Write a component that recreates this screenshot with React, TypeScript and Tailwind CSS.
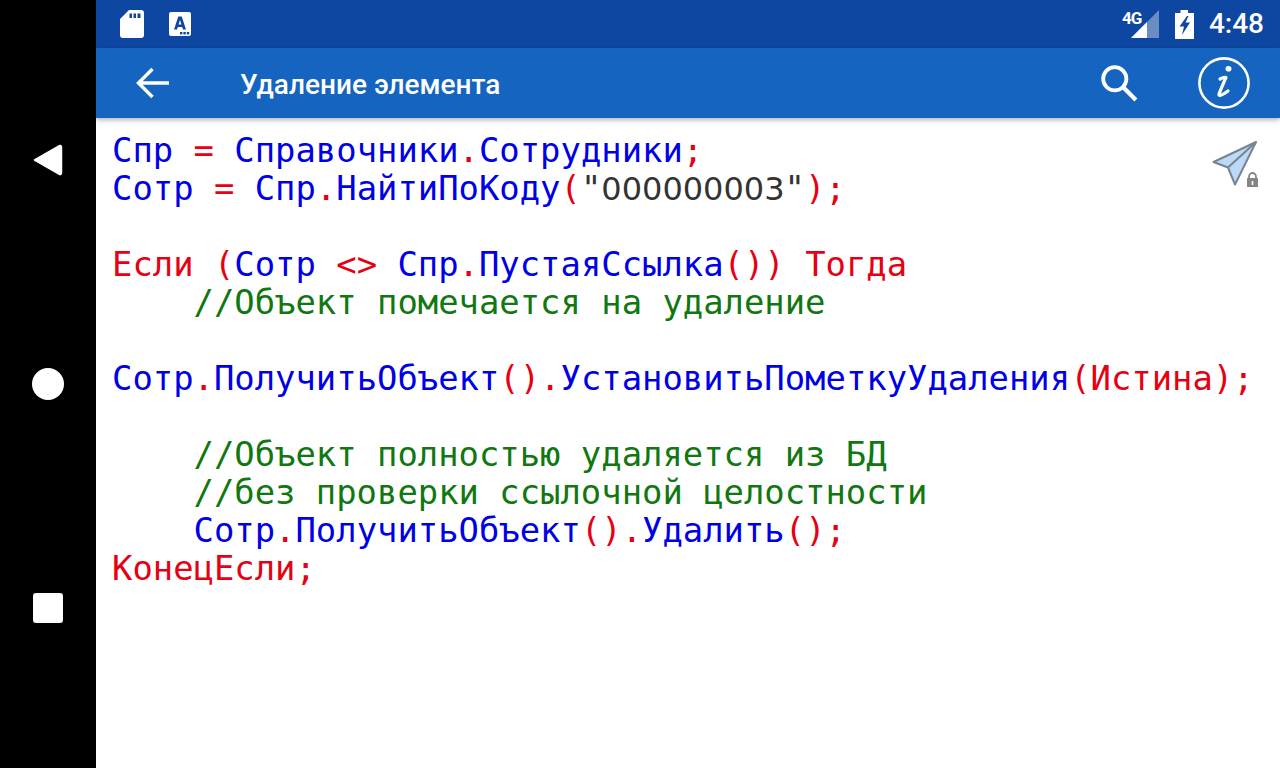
const B = "text-[#0000e6]";
const R = "text-[#e60012]";
const G = "text-[#117711]";
const K = "text-[#333333]";
const D = "text-[#333333] font-['DejaVu_Sans',sans-serif] text-[32px]";

type Seg = [string, string];
const lines: Seg[][] = [
  [[B, "Спр "], [R, "="], [B, " Справочники"], [R, "."], [B, "Сотрудники"], [R, ";"]],
  [[B, "Сотр "], [R, "="], [B, " Спр"], [R, "."], [B, "НайтиПоКоду"], [R, "("], [K, "\""], [D, "000000003"], [K, "\""], [R, ");"]],
  [],
  [[R, "Если ("], [B, "Сотр "], [R, "<>"], [B, " Спр"], [R, "."], [B, "ПустаяСсылка"], [R, "()) Тогда"]],
  [[G, "    //Объект помечается на удаление"]],
  [],
  [[B, "Сотр"], [R, "."], [B, "ПолучитьОбъект"], [R, "()."], [B, "УстановитьПометкуУдаления"], [R, "(Истина);"]],
  [],
  [[G, "    //Объект полностью удаляется из БД"]],
  [[G, "    //без проверки ссылочной целостности"]],
  [[B, "    Сотр"], [R, "."], [B, "ПолучитьОбъект"], [R, "()."], [B, "Удалить"], [R, "();"]],
  [[R, "КонецЕсли;"]],
];

function NavBar() {
  return (
    <div className="w-[96px] shrink-0 bg-black flex flex-col items-center">
      <svg width="32" height="34" viewBox="0 0 32 34" className="mt-[143px] ml-[-1px]">
        <path d="M2.5 17 L27 2.8 Q29.5 1.8 29.5 4.5 L29.5 29.5 Q29.5 32.2 27 31.2 Z" fill="#fff" stroke="#fff" strokeWidth="1.5" strokeLinejoin="round" />
      </svg>
      <div className="w-8 h-8 rounded-full bg-white mt-[191px]" />
      <div className="w-[30px] h-[30px] rounded-[3px] bg-white mt-[193px]" />
    </div>
  );
}

function StatusBar() {
  return (
    <div className="h-12 bg-[#0d47a1] flex items-center shrink-0 text-white">
      <svg width="24" height="28" viewBox="0 0 24 28" className="ml-6 mt-[-1px]">
        <path d="M9 0 H21 Q24 0 24 3 V25 Q24 28 21 28 H3 Q0 28 0 25 V9 Z M9.5 3.5 V8 H12 V3.5 Z M13.5 3.5 V8 H16 V3.5 Z M17.5 3.5 V8 H20.5 V3.5 Z" fill="#fff" fillRule="evenodd" />
      </svg>
      <svg width="22" height="24" viewBox="0 0 22 24" className="ml-[25px]">
        <path d="M2 0 H20 Q22 0 22 2 V22 Q22 24 20 24 H2 Q0 24 0 22 V2 Q0 0 2 0 Z" fill="#fff" />
        <path d="M5 17.5 L9.3 4.5 H12.7 L17 17.5 H14 L13.2 15 H8.8 L8 17.5 Z M9.6 12.5 H12.4 L11 8 Z" fill="#0d47a1" fillRule="evenodd" />
        <rect x="11" y="20" width="2.4" height="2.4" fill="#0d47a1" />
        <rect x="14.4" y="20" width="2.4" height="2.4" fill="#0d47a1" />
        <rect x="17.8" y="20" width="2.4" height="2.4" fill="#0d47a1" />
      </svg>
      <div className="flex-1" />
      <div className="relative w-[36px] h-[28px] mr-[17px] mt-[-1px]">
        <svg width="28" height="28" viewBox="0 0 28 28" className="absolute right-[-1px] top-0">
          <path d="M0 28 L28 0 V28 Z" fill="#fff" fillOpacity="0.38" />
          <path d="M0 28 L16 12 V28 Z" fill="#fff" />
        </svg>
        <span className="absolute left-0 top-[-1px] text-[17px] leading-[18px] tracking-[-1px] font-bold font-['Roboto',sans-serif]">4G</span>
      </div>
      <svg width="19" height="29" viewBox="0 0 19 29" className="mr-[15px]">
        <path d="M5.5 0 H13 V3 H19 V29 H0 V3 H5.5 Z" fill="#fff" />
        <path d="M12 6 L4.5 16.5 H9 L7 25 L15 12.5 H10.5 L13.5 6 Z" fill="#0d47a1" />
      </svg>
      <span className="text-[28px] leading-none font-medium font-['Roboto',sans-serif] mr-[16px]">4:48</span>
    </div>
  );
}

function AppBar() {
  return (
    <div className="h-[70px] bg-[#1565c0] flex items-center shrink-0 text-white shadow-[0_2px_5px_rgba(0,0,0,0.3)] relative z-10">
      <svg width="34" height="32" viewBox="0 0 34 32" className="ml-[40px]">
        <path d="M33 16 H3 M16.5 2 L2.5 16 L16.5 30" fill="none" stroke="#fff" strokeWidth="3.4" />
      </svg>
      <span className="ml-[70px] mt-[4px] text-[28px] font-medium font-['Roboto',sans-serif] leading-none">Удаление элемента</span>
      <div className="flex-1" />
      <svg width="38" height="38" viewBox="0 0 36 36" className="mr-[60px]">
        <circle cx="14" cy="14" r="11" fill="none" stroke="#fff" strokeWidth="3.6" />
        <path d="M22 22 L34 34" stroke="#fff" strokeWidth="4" />
      </svg>
      <svg width="52" height="52" viewBox="0 0 52 52" className="mr-[30px]">
        <circle cx="26" cy="26" r="24.6" fill="none" stroke="#fff" strokeWidth="2.6" />
        <ellipse cx="30.5" cy="11.8" rx="3" ry="2.8" fill="#fff" />
        <path d="M22 22 Q25.5 20 28 20.5 Q25 27 21 37 Q20 41 30 34" fill="none" stroke="#fff" strokeWidth="3.2" strokeLinecap="round" strokeLinejoin="round" />
      </svg>
    </div>
  );
}

function SendIcon() {
  return (
    <div className="absolute right-[20px] top-[21px] w-[48px] h-[50px]">
      <svg width="48" height="50" viewBox="0 0 48 50">
        <path d="M44 3 L1.5 23 L16 28.5 L23 45.5 Z" fill="#bcd9f8" stroke="#78848f" strokeWidth="2" strokeLinejoin="round" />
        <path d="M44 3 L16 28.5" fill="none" stroke="#78848f" strokeWidth="2" />
        <path d="M37 39 V37.5 A3.5 3.5 0 0 1 44 37.5 V39" fill="none" stroke="#858585" strokeWidth="1.8" />
        <rect x="35" y="39" width="11" height="9" rx="0.5" fill="#858585" />
        <rect x="39.7" y="42" width="1.6" height="4" fill="#fff" />
      </svg>
    </div>
  );
}

export default function App() {
  return (
    <div className="w-[1280px] h-[768px] flex overflow-hidden bg-white">
      <NavBar />
      <div className="flex-1 flex flex-col min-w-0">
        <StatusBar />
        <AppBar />
        <div className="relative flex-1 bg-white pl-[16px] pt-[14px] font-['DejaVu_Sans_Mono',monospace] text-[33.86px] leading-[38px] whitespace-pre">
          {lines.map((segs, i) => (
            <div key={i} className="h-[38px]">
              {segs.map(([c, t], j) => (
                <span key={j} className={c}>{t}</span>
              ))}
            </div>
          ))}
          <SendIcon />
        </div>
      </div>
    </div>
  );
}
